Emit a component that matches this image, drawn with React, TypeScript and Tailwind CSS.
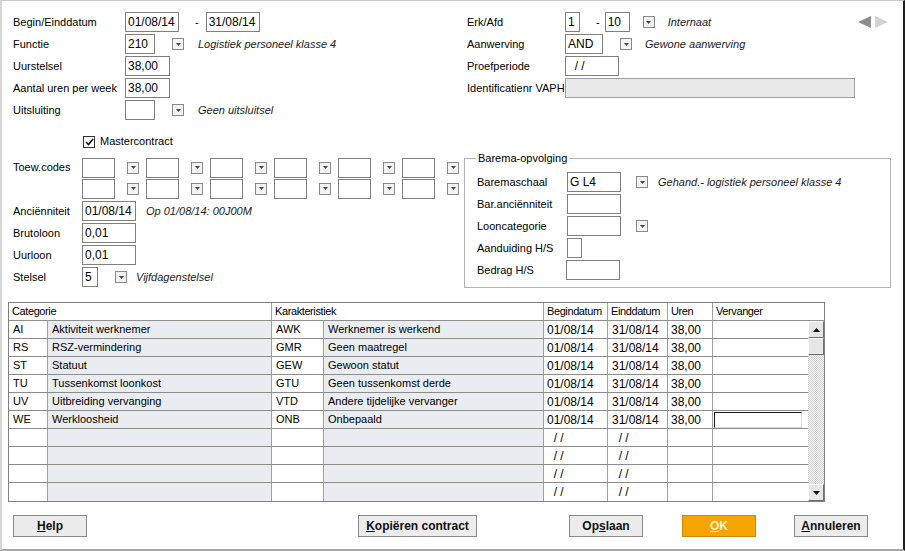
const inputBase =
  "flex h-[20px] shrink-0 items-center border border-[#7f7f7f] bg-white pl-[2px] text-[12px] whitespace-pre";

function Drop({ className = "" }: { className?: string }) {
  return (
    <span
      className={`flex h-[12px] w-[12px] shrink-0 items-center justify-center border border-[#8a8a8a] bg-[#f3f3f3] ${className}`}
    >
      <svg width="5" height="3" viewBox="0 0 5 3">
        <path d="M0 0h5L2.5 3z" fill="#444" />
      </svg>
    </span>
  );
}

function Note({ children, className = "" }: { children: React.ReactNode; className?: string }) {
  return <span className={`whitespace-nowrap italic text-[#1c1c1c] ${className}`}>{children}</span>;
}

const rows = [
  ["AI", "Aktiviteit werknemer", "AWK", "Werknemer is werkend"],
  ["RS", "RSZ-vermindering", "GMR", "Geen maatregel"],
  ["ST", "Statuut", "GEW", "Gewoon statut"],
  ["TU", "Tussenkomst loonkost", "GTU", "Geen tussenkomst derde"],
  ["UV", "Uitbreiding vervanging", "VTD", "Andere tijdelijke vervanger"],
  ["WE", "Werkloosheid", "ONB", "Onbepaald"],
  ["", "", "", ""],
  ["", "", "", ""],
  ["", "", "", ""],
  ["", "", "", ""],
];

function ScrollBtn({ up }: { up?: boolean }) {
  return (
    <div className="flex h-[17px] shrink-0 items-center justify-center border border-b-[#6f6f6f] border-l-white border-r-[#6f6f6f] border-t-white bg-[#e6e6e6]">
      {up !== undefined && (
        <svg width="7" height="4" viewBox="0 0 7 4">
          <path d={up ? "M0 4h7L3.5 0z" : "M0 0h7L3.5 4z"} fill="#111" />
        </svg>
      )}
    </div>
  );
}

function Button({
  children,
  className = "",
}: {
  children: React.ReactNode;
  className?: string;
}) {
  return (
    <button
      type="button"
      className={`flex h-[22px] shrink-0 items-center justify-center border text-[12px] font-bold ${className}`}
    >
      {children}
    </button>
  );
}

export default function App() {
  return (
    <div className="flex h-[551px] w-[905px] flex-col overflow-hidden border-b-2 border-l-2 border-r-2 border-t border-b-[#a8a8a8] border-l-[#d6d6d6] border-r-[#1e1e1e] border-t-[#c8c8c8] bg-white font-['Liberation_Sans',Arial,sans-serif] text-[11px] text-black">
      {/* top fields */}
      <div className="flex pt-[10px]">
        <div className="w-[465px] shrink-0 pl-[11px]">
          <div className="flex h-[22px] items-center">
            <span className="w-[112px] shrink-0">Begin/Einddatum</span>
            <span className={`${inputBase} w-[54px]`}>01/08/14</span>
            <span className="ml-[16px] mr-[7px]">-</span>
            <span className={`${inputBase} w-[54px]`}>31/08/14</span>
          </div>
          <div className="flex h-[22px] items-center">
            <span className="w-[112px] shrink-0">Functie</span>
            <span className={`${inputBase} w-[30px]`}>210</span>
            <Drop className="ml-[17px]" />
            <Note className="ml-[14px]">Logistiek personeel klasse 4</Note>
          </div>
          <div className="flex h-[22px] items-center">
            <span className="w-[112px] shrink-0">Uurstelsel</span>
            <span className={`${inputBase} w-[45px]`}>38,00</span>
          </div>
          <div className="flex h-[22px] items-center">
            <span className="w-[112px] shrink-0">Aantal uren per week</span>
            <span className={`${inputBase} w-[45px]`}>38,00</span>
          </div>
          <div className="flex h-[22px] items-center">
            <span className="w-[112px] shrink-0">Uitsluiting</span>
            <span className={`${inputBase} w-[30px]`}></span>
            <Drop className="ml-[17px]" />
            <Note className="ml-[14px]">Geen uitsluitsel</Note>
          </div>
        </div>
        <div className="flex-1 pr-[15px]">
          <div className="flex h-[22px] items-center">
            <span className="w-[98px] shrink-0">Erk/Afd</span>
            <span className={`${inputBase} w-[15px]`}>1</span>
            <span className="ml-[16px] mr-[5px]">-</span>
            <span className={`${inputBase} w-[25px]`}>10</span>
            <Drop className="ml-[13px]" />
            <Note className="ml-[13px]">Internaat</Note>
            <div className="ml-auto flex items-center gap-[4px]">
              <svg width="13" height="12" viewBox="0 0 13 12">
                <path d="M13 0v12L0 6z" fill="#8e8e8e" />
              </svg>
              <svg width="13" height="12" viewBox="0 0 13 12">
                <path d="M0 0v12L13 6z" fill="#d2d2d2" />
              </svg>
            </div>
          </div>
          <div className="flex h-[22px] items-center">
            <span className="w-[98px] shrink-0">Aanwerving</span>
            <span className={`${inputBase} w-[38px]`}>AND</span>
            <Drop className="ml-[17px]" />
            <Note className="ml-[13px]">Gewone aanwerving</Note>
          </div>
          <div className="flex h-[22px] items-center">
            <span className="w-[98px] shrink-0">Proefperiode</span>
            <span className={`${inputBase} w-[54px]`}>{"  / /"}</span>
          </div>
          <div className="flex h-[22px] items-center">
            <span className="w-[98px] shrink-0 whitespace-nowrap">Identificatienr VAPH</span>
            <span className="h-[20px] w-[290px] shrink-0 border border-[#a0a0a0] bg-[#e9e9e9]" />
          </div>
        </div>
      </div>

      {/* middle section */}
      <div className="mt-[10px] flex">
        <div className="w-[462px] shrink-0 pl-[11px]">
          <div className="flex h-[21px] items-center pl-[70px]">
            <span className="flex h-[12px] w-[12px] items-center justify-center border border-[#333] bg-white">
              <svg width="9" height="8" viewBox="0 0 9 8">
                <path d="M1 4l2.5 2.5L8 1" fill="none" stroke="#111" strokeWidth="1.6" />
              </svg>
            </span>
            <span className="ml-[5px]">Mastercontract</span>
          </div>
          <div className="mt-[5px] flex">
            <span className="flex h-[21px] w-[69px] shrink-0 items-center">Toew.codes</span>
            <div>
              {[0, 1].map((r) => (
                <div key={r} className="flex h-[21px] items-center">
                  {[0, 1, 2, 3, 4, 5].map((i) => (
                    <div key={i} className="flex items-center">
                      <span className={`${inputBase} w-[33px] ${i > 0 ? "ml-[7px]" : ""}`}></span>
                      <Drop className="ml-[12px]" />
                    </div>
                  ))}
                </div>
              ))}
            </div>
          </div>
          <div className="mt-[1px]">
            <div className="flex h-[22px] items-center">
              <span className="w-[69px] shrink-0">Anciënniteit</span>
              <span className={`${inputBase} w-[54px]`}>01/08/14</span>
              <Note className="ml-[10px]">Op 01/08/14: 00J00M</Note>
            </div>
            <div className="flex h-[22px] items-center">
              <span className="w-[69px] shrink-0">Brutoloon</span>
              <span className={`${inputBase} w-[54px]`}>0,01</span>
            </div>
            <div className="flex h-[22px] items-center">
              <span className="w-[69px] shrink-0">Uurloon</span>
              <span className={`${inputBase} w-[54px]`}>0,01</span>
            </div>
            <div className="flex h-[22px] items-center">
              <span className="w-[69px] shrink-0">Stelsel</span>
              <span className={`${inputBase} w-[16px]`}>5</span>
              <Drop className="ml-[17px]" />
              <Note className="ml-[9px]">Vijfdagenstelsel</Note>
            </div>
          </div>
        </div>

        <fieldset className="mt-[21px] w-[427px] shrink-0 border border-[#b4b4b4] pb-[6px] pl-[12px] pt-[6px]">
          <legend className="ml-[-1px] px-[2px] leading-[13px]">Barema-opvolging</legend>
          <div className="flex h-[22px] items-center">
            <span className="w-[90px] shrink-0">Baremaschaal</span>
            <span className={`${inputBase} w-[54px]`}>G L4</span>
            <Drop className="ml-[15px]" />
            <Note className="ml-[10px]">Gehand.- logistiek personeel klasse 4</Note>
          </div>
          <div className="flex h-[22px] items-center">
            <span className="w-[90px] shrink-0">Bar.anciënniteit</span>
            <span className={`${inputBase} w-[54px]`}></span>
          </div>
          <div className="flex h-[22px] items-center">
            <span className="w-[90px] shrink-0">Looncategorie</span>
            <span className={`${inputBase} w-[54px]`}></span>
            <Drop className="ml-[15px]" />
          </div>
          <div className="flex h-[22px] items-center">
            <span className="w-[90px] shrink-0">Aanduiding H/S</span>
            <span className={`${inputBase} w-[15px]`}></span>
          </div>
          <div className="flex h-[22px] items-center">
            <span className="w-[89px] shrink-0">Bedrag H/S</span>
            <span className={`${inputBase} w-[54px]`}></span>
          </div>
        </fieldset>
      </div>

      {/* grid */}
      <div className="ml-[6px] mt-[14px] w-[817px] border border-[#808080]">
        <div className="flex h-[18px] items-center border-b border-[#909090] tracking-[-0.4px]">
          <span className="flex h-full w-[263px] items-center border-r border-[#a0a0a0] pl-[3px]">Categorie</span>
          <span className="flex h-full w-[272px] items-center border-r border-[#a0a0a0] pl-[3px]">Karakteristiek</span>
          <span className="flex h-full w-[64px] items-center border-r border-[#a0a0a0] pl-[3px]">Begindatum</span>
          <span className="flex h-full w-[60px] items-center border-r border-[#a0a0a0] pl-[3px]">Einddatum</span>
          <span className="flex h-full w-[45px] items-center border-r border-[#a0a0a0] pl-[3px]">Uren</span>
          <span className="flex h-full flex-1 items-center pl-[3px]">Vervanger</span>
        </div>
        <div className="flex">
          <div className="w-[799px] shrink-0">
            {rows.map((r, idx) => {
              const filled = r[0] !== "";
              const last = idx === rows.length - 1;
              return (
                <div
                  key={idx}
                  className={`flex h-[18px] ${last ? "" : "border-b border-[#8c8c8c]"}`}
                >
                  <span className="flex w-[39px] items-center border-r border-[#a0a0a0] pl-[4px]">{r[0]}</span>
                  <span className="flex w-[224px] items-center border-r border-[#a0a0a0] bg-[#e9edf2] pl-[4px]">{r[1]}</span>
                  <span className="flex w-[52px] items-center border-r border-[#a0a0a0] pl-[4px]">{r[2]}</span>
                  <span className="flex w-[220px] items-center border-r border-[#a0a0a0] bg-[#e9edf2] pl-[4px]">{r[3]}</span>
                  <span className="flex w-[64px] items-center whitespace-pre border-r border-[#a0a0a0] pl-[3px] text-[12px]">
                    {filled ? "01/08/14" : "  / /"}
                  </span>
                  <span className="flex w-[60px] items-center whitespace-pre border-r border-[#a0a0a0] pl-[4px] text-[12px]">
                    {filled ? "31/08/14" : "  / /"}
                  </span>
                  <span className="flex w-[45px] items-center border-r border-[#a0a0a0] pl-[3px] text-[12px]">
                    {filled ? "38,00" : ""}
                  </span>
                  <span className="flex flex-1 items-center pl-[1px]">
                    {idx === 5 && (
                      <span className="h-[16px] w-[88px] border border-b-[#dcdcdc] border-l-[#1a1a1a] border-r-[#dcdcdc] border-t-[#1a1a1a] bg-white" />
                    )}
                  </span>
                </div>
              );
            })}
          </div>
          <div className="flex w-[16px] shrink-0 flex-col">
            <ScrollBtn up />
            <ScrollBtn />
            <div className="flex-1 bg-[repeating-conic-gradient(#cfcfcf_0_25%,#f6f6f6_0_50%)] bg-[length:2px_2px]" />
            <ScrollBtn up={false} />
          </div>
        </div>
      </div>

      {/* buttons */}
      <div className="mt-[13px] flex pl-[11px]">
        <Button className="w-[74px] border-[#8a8a8a] bg-[#ececec] text-[#111]">
          <span><u>H</u>elp</span>
        </Button>
        <Button className="ml-[271px] w-[119px] border-[#8a8a8a] bg-[#ececec] text-[#111]">
          <span><u>K</u>opiëren contract</span>
        </Button>
        <Button className="ml-[92px] w-[74px] border-[#8a8a8a] bg-[#ececec] text-[#111]">
          <span>Op<u>s</u>laan</span>
        </Button>
        <Button className="ml-[39px] w-[74px] border-[#c98a06] bg-[#f5a500] text-[#fff4cf]">
          <span><u>O</u>K</span>
        </Button>
        <Button className="ml-[38px] w-[74px] border-[#8a8a8a] bg-[#ececec] text-[#111]">
          <span><u>A</u>nnuleren</span>
        </Button>
      </div>
    </div>
  );
}
